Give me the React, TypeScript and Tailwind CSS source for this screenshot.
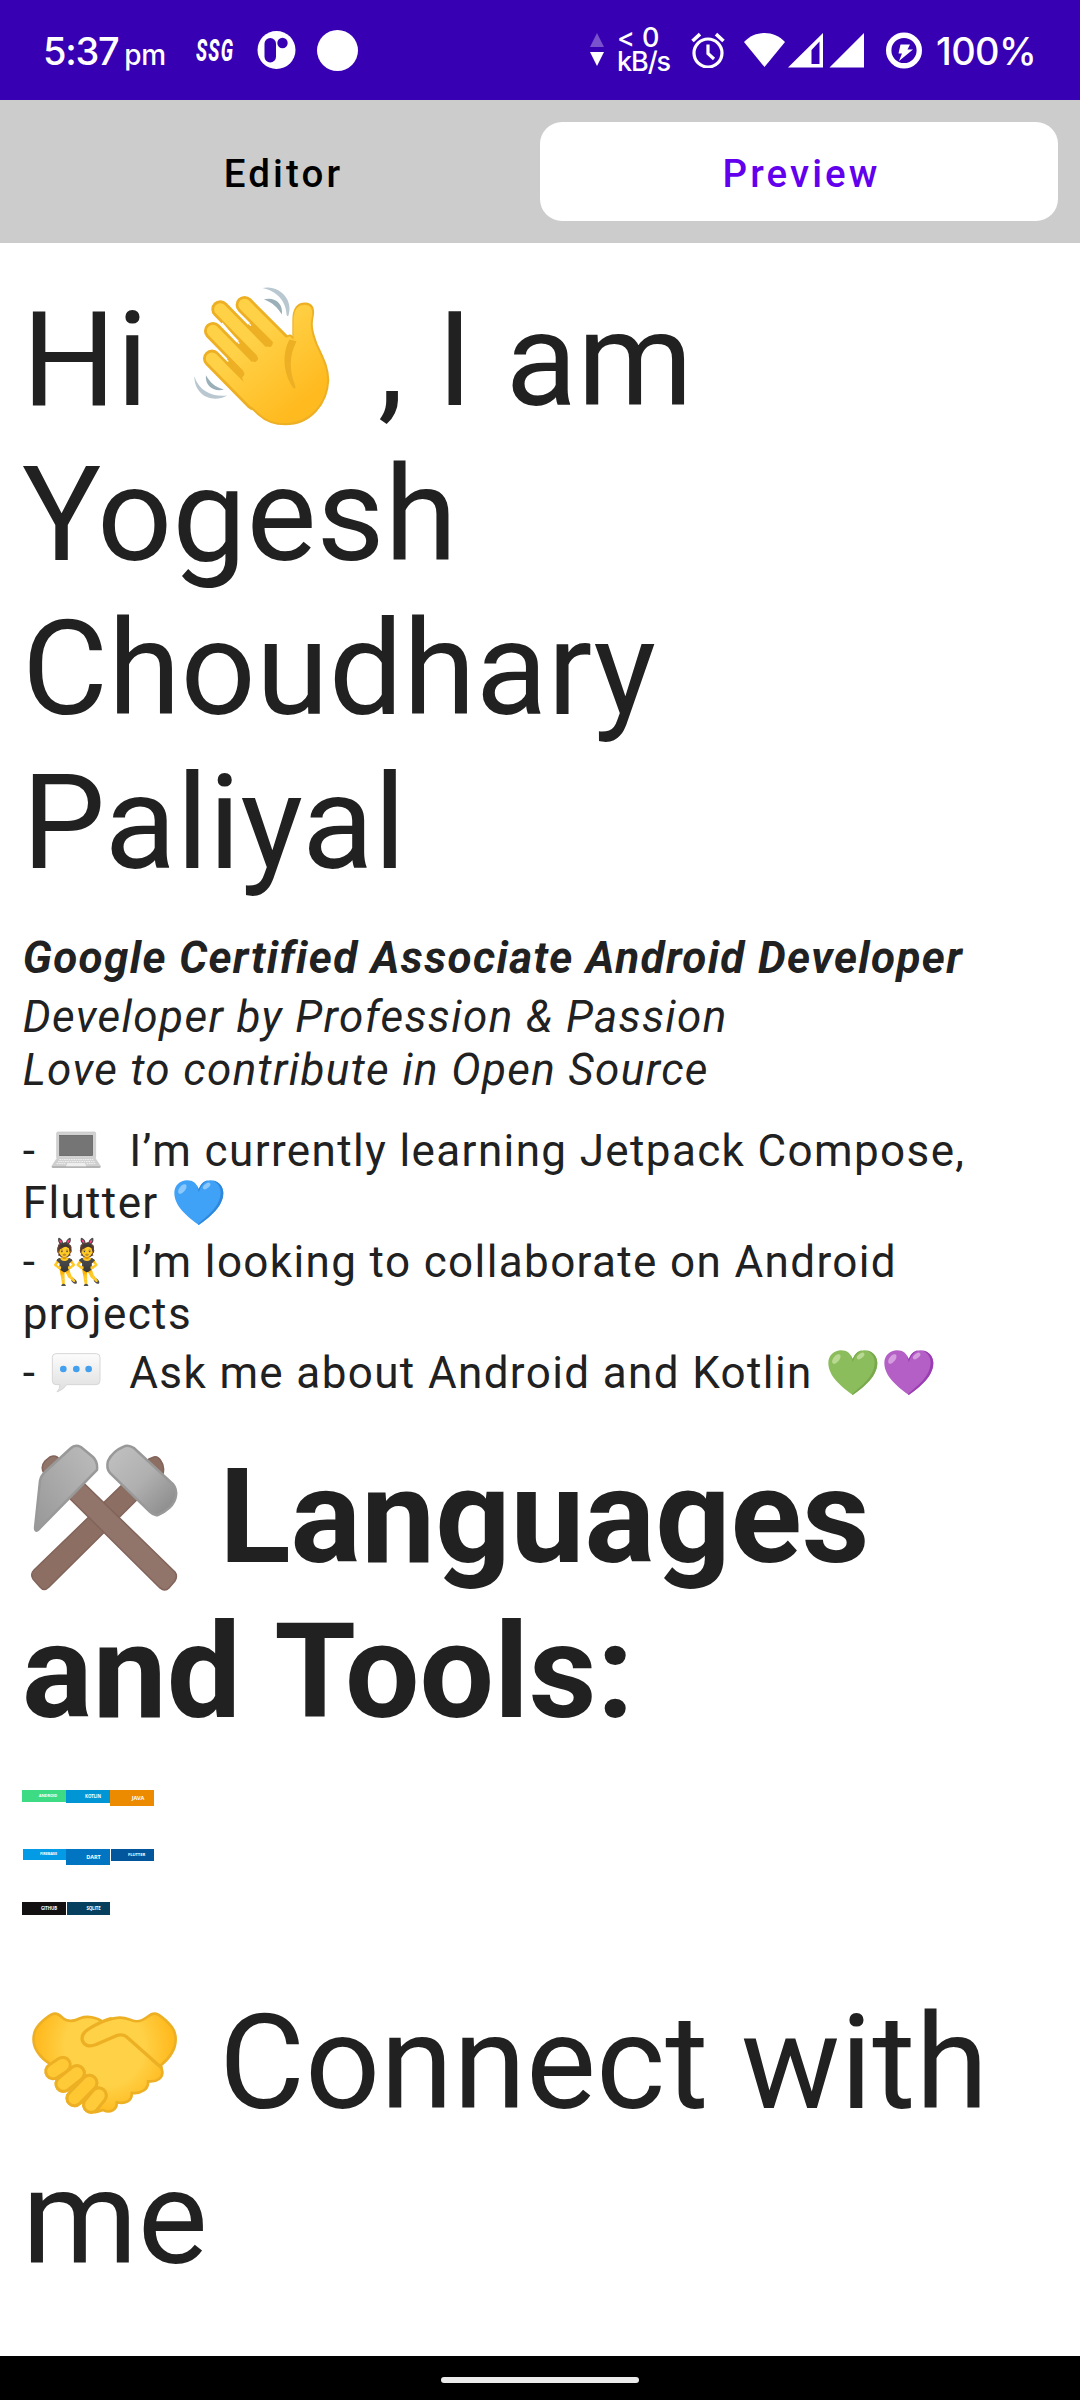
import type { ReactNode } from "react";

/* ---------- status bar icons ---------- */

function AlarmIcon() {
  return (
    <svg width="34" height="36" viewBox="0 0 34 36" fill="none" stroke="#fff" className="ml-[19px]">
      <circle cx="17" cy="21" r="14" strokeWidth="3.2" />
      <path d="M17 12.5V21.5L23 27" strokeWidth="3.2" />
      <path d="M1.5 9L9 2.2M32.5 9L25 2.2" strokeWidth="3.6" />
    </svg>
  );
}

function NetworkArrows() {
  return (
    <svg width="14" height="34" viewBox="0 0 14 34">
      <path d="M7 0L14 14H0Z" fill="#7a52cd" />
      <path d="M0 19H14L7 33Z" fill="#fff" />
    </svg>
  );
}

function SignalIcons() {
  return (
    <svg width="121" height="36" viewBox="0 0 121 36" fill="#fff" className="ml-[19px]">
      <path d="M0 10C11-2 30-2 41 10L20.5 35Z" />
      <path fillRule="evenodd" d="M79 1V35.5H44ZM75.5 9.5L67.5 18V32H75.5Z" />
      <path d="M120 1V35.5H85.500Z" />
    </svg>
  );
}

function ChargeIcon() {
  return (
    <svg width="36" height="37" viewBox="0 0 36 37" className="ml-[21px]">
      <circle cx="18" cy="18.500" r="15.300" fill="none" stroke="#fff" strokeWidth="5.400" />
      <path d="M14.500 12.500H24L21.500 17.500H27L13 29L16 21.500H12.500Z" fill="#fff" />
    </svg>
  );
}

function StatusBar() {
  return (
    <header className="flex h-[100px] items-center bg-[#3700b3] font-['Inter'] font-medium text-white">
      <div className="ml-[43px] flex w-[123px] items-baseline pt-[3px] whitespace-nowrap">
        <span className="text-[38px] leading-[46px] tracking-[-1.300px]">5:37</span>
        <span className="ml-[6px] text-[28px] tracking-[-0.300px]">pm</span>
      </div>
      <div className="ml-[30px] w-[42px]">
        <span className="inline-block origin-left scale-x-[0.58] font-['Roboto'] text-[32px] leading-[32px] font-extrabold tracking-[2px] italic">
          SSG
        </span>
      </div>
      <svg width="39" height="38" viewBox="0 0 39 38" className="ml-[19px]">
        <circle cx="19.500" cy="19" r="19" fill="#fff" />
        <rect x="7.500" y="7" width="11.500" height="24.500" rx="5.700" fill="#3700b3" />
        <circle cx="25.500" cy="12" r="5.200" fill="#3700b3" />
      </svg>
      <div className="ml-[21px] size-[41px] rounded-full bg-white" />
      <div className="ml-auto flex items-center pr-[45px]">
        <NetworkArrows />
        <div className="ml-[13px] w-[55px] text-[27px] leading-[24.500px] tracking-[-1.100px] whitespace-nowrap">
          <div className="[word-spacing:2px]">&lt; 0</div>
          <div>kB/s</div>
        </div>
        <AlarmIcon />
        <SignalIcons />
        <ChargeIcon />
        <span className="ml-[14px] w-[99px] pt-[2px] text-[38px] leading-[46px] tracking-[-0.600px] whitespace-nowrap">
          100%
        </span>
      </div>
    </header>
  );
}

/* ---------- emoji artwork ---------- */

function Emoji({ viewBox, children }: { viewBox: string; children: ReactNode }) {
  return (
    <span className="inline-block h-[1.17em] w-[1.245em] align-[-0.243em]">
      <svg viewBox={viewBox} className="mx-auto h-full w-[1.17em]">
        {children}
      </svg>
    </span>
  );
}

const FINGERS = "M193 104L320 231M120 117L262 262M98 182L225 312M95 265L222 394";
const PALM =
  "M330 197L341 208L341 150C341 118 352 101 375 101C396 101 400 118 396 138C390 165 394 185 408 222C425 260 443 290 443 330C440 400 390 461 315 461C280 461 255 449 235 431L205 402L182 311L223 265L267 220Z";

function WavingHand() {
  return (
    <Emoji viewBox="17 38 464 464">
      <defs>
        <linearGradient id="hand" gradientUnits="userSpaceOnUse" x1="210" y1="210" x2="370" y2="400">
          <stop offset="0" stopColor="#ffd147" />
          <stop offset="1" stopColor="#ffba1f" />
        </linearGradient>
      </defs>
      <path d={FINGERS} stroke="#edb024" strokeWidth="54" strokeLinecap="round" />
      <path d={PALM} fill="#edb024" stroke="#edb024" strokeWidth="9" strokeLinejoin="round" />
      <path d={FINGERS} stroke="url(#hand)" strokeWidth="37" strokeLinecap="round" />
      <path d={PALM} fill="url(#hand)" stroke="url(#hand)" strokeWidth="1" transform="translate(4.500 4.500) scale(.985)" />
      <path
        d="M213 167L267 220M178 222L223 265M145 275L182 311"
        stroke="#edb024"
        strokeWidth="20"
        strokeLinecap="round"
      />
      <path d="M161 116L212 166M125 158L177 220M115 244L144 274" stroke="#fff" strokeWidth="4" />
      <path d="M328 208C305 250 308 312 341 356C348 354 346 349 344 343C328 300 326 260 349 213Z" fill="#edb024" />
      <path d="M247 53C300 42 342 92 324 138C321 138 319 136 319 132C318 96 292 62 247 53Z" fill="#b9c8d0" />
      <path d="M251 87C284 78 310 100 305 133C292 112 278 98 251 87Z" fill="#9aafb8" />
      <path d="M42 318C42 372 92 402 141 376C100 381 58 366 42 318Z" fill="#b9c8d0" />
      <path d="M77 315C73 345 100 367 131 358C104 350 90 338 77 315Z" fill="#9aafb8" />
    </Emoji>
  );
}

function Hammers() {
  return (
    <Emoji viewBox="0 0 154.500 154.500">
      <defs>
        <linearGradient id="steel" x1="0" y1="0" x2="1" y2="1">
          <stop offset="0" stopColor="#c2c2c2" />
          <stop offset=".5" stopColor="#b0b0b0" />
          <stop offset="1" stopColor="#868686" />
        </linearGradient>
        <linearGradient id="steelB" x1="1" y1="0" x2="0" y2="1">
          <stop offset="0" stopColor="#bdbdbd" />
          <stop offset="1" stopColor="#979797" />
        </linearGradient>
      </defs>
      <path
        d="M122 19L127 17Q131 16 134 21Q138 26 136 34L22 147Q17 152 13 147L6 139Q3 134 7 130Z"
        fill="#8d6e63"
        stroke="#82645a"
        strokeWidth="1.500"
      />
      <path
        d="M33 20L148 132Q151 136 148 141L142 148Q138 152 133 148L17 33Q13 27 18 21L23 17Q29 14 33 20Z"
        fill="#91746a"
        stroke="#82645a"
        strokeWidth="1.500"
      />
      <path
        d="M44 8Q48 4 54 7L66 17Q71 22 70 30L11 90Q8 92 8 88L13 41Q14 36 18 32Z"
        fill="url(#steelB)"
        stroke="#999"
        strokeWidth="2.500"
      />
      <path
        d="M96 7Q101 4 107 8L146 44Q150 49 149 56C148 65 139 72 131 75Q127 76 123 72L83 33Q79 28 81 21Q86 11 96 7Z"
        fill="url(#steel)"
        stroke="#999"
        strokeWidth="2.500"
      />
    </Emoji>
  );
}

function Handshake() {
  return (
    <Emoji viewBox="20.400 -13 464 464">
      <defs>
        <radialGradient id="shake" gradientUnits="userSpaceOnUse" cx="253" cy="170" r="215">
          <stop offset=".55" stopColor="#ffd147" />
          <stop offset=".95" stopColor="#ffba1f" />
        </radialGradient>
      </defs>
      <path
        d="M105 70C90 70 83 80 70 90C50 108 40 122 40 148C40 175 60 203 88 220L180 330L225 366C238 366 244 358 250 360C268 370 292 360 290 336C315 343 337 332 335 308C362 312 387 297 384 273C410 277 432 262 426 240L422 226C448 205 467 178 467 148C467 120 455 108 437 90C425 80 417 70 403 70C385 70 378 93 350 93C335 93 320 80 296 82C275 83 262 89 247 94C230 80 200 76 180 84C160 95 140 93 130 85C120 76 115 70 105 70Z"
        fill="url(#shake)"
        stroke="#edb024"
        strokeWidth="8"
        strokeLinejoin="round"
      />
      <path
        d="M426 234L321 141C312 132 302 132 287 137L228 163C206 172 190 165 186 148C184 130 196 122 216 110C236 98 252 90 275 84"
        fill="none"
        stroke="#edb024"
        strokeWidth="10"
        strokeLinejoin="round"
      />
      <g strokeLinecap="round">
        <path d="M99 243L128 224M130 281L170 249M163 324L208 278M213 344L236 316" stroke="#edb024" strokeWidth="54" />
        <path d="M99 243L128 224" stroke="#ffc935" strokeWidth="36" />
        <path d="M130 281L170 249" stroke="#edb024" strokeWidth="54" />
        <path d="M130 281L170 249" stroke="#ffca37" strokeWidth="36" />
        <path d="M163 324L208 278" stroke="#edb024" strokeWidth="54" />
        <path d="M163 324L208 278" stroke="#ffc833" strokeWidth="36" />
        <path d="M213 344L236 316" stroke="#edb024" strokeWidth="54" />
        <path d="M213 344L236 316" stroke="#ffcb3a" strokeWidth="36" />
      </g>
    </Emoji>
  );
}

function Laptop() {
  return (
    <Emoji viewBox="58 48 154.500 154.500">
      <rect x="78" y="69" width="117" height="80" rx="4" fill="#d2d2d2" stroke="#c4c4c4" strokeWidth="2" />
      <rect x="87" y="79" width="99" height="61" fill="#757575" stroke="#5f5f5f" strokeWidth="2" />
      <path d="M78 148H195L210 170H63Z" fill="#cfcfcf" />
      <path d="M63 170H210V174Q210 177 206 177H67Q63 177 63 174Z" fill="#b4b4b4" />
      <path d="M86 152H188M82 158H192M78 164H105M168 164H196" stroke="#f4f4f4" strokeWidth="3" strokeDasharray="5 2" />
      <path d="M110 162H163L167 172H106Z" fill="#eee" />
    </Emoji>
  );
}

function SpeechBubble() {
  return (
    <Emoji viewBox="58 711 154.500 154.500">
      <defs>
        <linearGradient id="bubble" x1="0" y1="0" x2="0" y2="1">
          <stop offset="0" stopColor="#fcfcfc" />
          <stop offset="1" stopColor="#dedede" />
        </linearGradient>
      </defs>
      <path
        d="M76 731H197Q208 731 208 742V812Q208 824 197 824H108Q98 840 79 846Q88 836 88 824H76Q65 824 65 812V742Q65 731 76 731Z"
        fill="url(#bubble)"
        stroke="#d6d6d6"
        strokeWidth="3"
      />
      <g fill="#42a0ee">
        <circle cx="98" cy="777" r="10" />
        <circle cx="137" cy="777" r="10" />
        <circle cx="174" cy="777" r="10" />
      </g>
    </Emoji>
  );
}

function Heart({ fill, shade, shine }: { fill: string; shade: string; shine: string }) {
  return (
    <Emoji viewBox="0 0 154.500 154.500">
      <path
        d="M77.500 144C60 130 4 95 4 48C4 25 22 10 42 10C60 10 72 20 77.500 37C83 20 95 10 113 10C133 10 151 25 151 48C151 95 95 130 77.500 144Z"
        fill={fill}
      />
      <path
        d="M120 10.500C138 14 151 28 151 48C151 95 95 130 77.500 144L75 142C100 118 142 92 143 46C143 30 134 18 120 10.500Z"
        fill={shade}
      />
      <path d="M77.500 46L72 27C75 31 76 33 77.500 37C82 22 92 12 105 10.500C92 17 84 27 77.500 46Z" fill={shade} />
      <ellipse cx="28" cy="36" rx="9" ry="17" transform="rotate(38 28 36)" fill={shine} />
      <ellipse cx="101" cy="27" rx="7" ry="13" transform="rotate(52 101 27)" fill={shine} />
    </Emoji>
  );
}

/* ---------- document ---------- */

function Badge({ label, className }: { label: string; className: string }) {
  return (
    <span
      className={`flex items-center justify-center font-['Open_Sans'] font-bold tracking-[-0.100px] text-white ${className}`}
    >
      {label}
    </span>
  );
}

function Tabs() {
  return (
    <nav className="grid h-[143px] grid-cols-2 bg-[#ccc] p-[22px] font-['Roboto'] text-[38.500px] font-medium tracking-[3.100px]">
      <button className="rounded-[22px] pt-[4px] pl-[5px] text-black">Editor</button>
      <button className="rounded-[22px] bg-white pt-[4px] pl-[5px] text-[#6200ee]">Preview</button>
    </nav>
  );
}

export default function App() {
  return (
    <div className="flex h-[2400px] w-[1080px] flex-col overflow-hidden bg-white">
      <StatusBar />
      <Tabs />
      <main className="flex-1 px-[22px] pt-[40px] font-['Roboto'] text-[44px] leading-[52px] tracking-[1.375px] whitespace-nowrap text-[#212121]">
        <h1 className="text-[132px] leading-[154.300px] tracking-normal">
          Hi <WavingHand /> , I am
          <br />
          Yogesh
          <br />
          Choudhary
          <br />
          Paliyal
        </h1>
        <div className="pl-[0.700px]">
          <p className="mt-[31.500px] font-bold italic">Google Certified Associate Android Developer</p>
          <p className="mt-[7px] leading-[52.500px] italic">
            Developer by Profession &amp; Passion
            <br />
            Love to contribute in Open Source
          </p>
          <div className="mt-[28.800px] flex flex-col gap-[7px] whitespace-pre">
            <div>
              <p>
                {"- "}
                <Laptop />
                <span className="ml-[1.400px]">{"  I’m currently learning Jetpack Compose,"}</span>
              </p>
              <p>
                {"Flutter "}
                <Heart fill="#40a2f6" shade="#2f87dc" shine="#8cc8fb" />
              </p>
            </div>
            <div>
              <p>{"- 👯  I’m looking to collaborate on Android"}</p>
              <p>projects</p>
            </div>
            <p>
              {"- "}
              <SpeechBubble />
              <span className="ml-[1.400px]">{"  Ask me about Android and Kotlin "}</span>
              <Heart fill="#8cbd5c" shade="#7aa94d" shine="#b9d993" />
              <span className="ml-[1.400px]">
                <Heart fill="#b45fc5" shade="#9a3cb3" shine="#d49ddd" />
              </span>
            </p>
          </div>
        </div>
        <h2 className="mt-[41.500px] text-[132px] leading-[154.500px] font-bold tracking-normal">
          <Hammers /> Languages
          <br />
          and <span className="ml-[0.500px]">Tools:</span>
        </h2>
        <div className="mt-[40px] flex h-[59px] items-start">
          <Badge label="ANDROID" className="h-[12px] w-[44px] bg-[#3ddc84] pl-[8px] text-[4px]" />
          <Badge label="KOTLIN" className="h-[13px] w-[44px] bg-[#0095d5] pl-[10px] text-[4.400px]" />
          <Badge label="JAVA" className="h-[16px] w-[44px] bg-[#ed8b00] pl-[12px] text-[5.500px]" />
        </div>
        <div className="flex h-[53px] items-start pl-px">
          <Badge label="FIREBASE" className="h-[11px] w-[43px] bg-[#039be5] pl-[8px] text-[3.900px]" />
          <Badge label="DART" className="h-[16px] w-[44px] bg-[#0175c2] pl-[11px] text-[5.500px]" />
          <Badge label="FLUTTER" className="ml-px h-[12px] w-[43px] bg-[#02569b] pl-[8px] text-[4.200px]" />
        </div>
        <div className="flex h-[84.500px] items-start">
          <Badge label="GITHUB" className="h-[13px] w-[44px] bg-[#121011] pl-[10px] text-[4.400px]" />
          <Badge label="SQLITE" className="ml-px h-[13px] w-[43px] bg-[#07405e] pl-[10px] text-[4.400px]" />
        </div>
        <h1 className="text-[132px] leading-[154.500px] tracking-normal">
          <Handshake /> Connect with
          <br />
          me
        </h1>
      </main>
      <footer className="flex h-[44px] items-center justify-center bg-black pt-[4px]">
        <div className="h-[6px] w-[198px] rounded-full bg-[#ebebeb]" />
      </footer>
    </div>
  );
}
